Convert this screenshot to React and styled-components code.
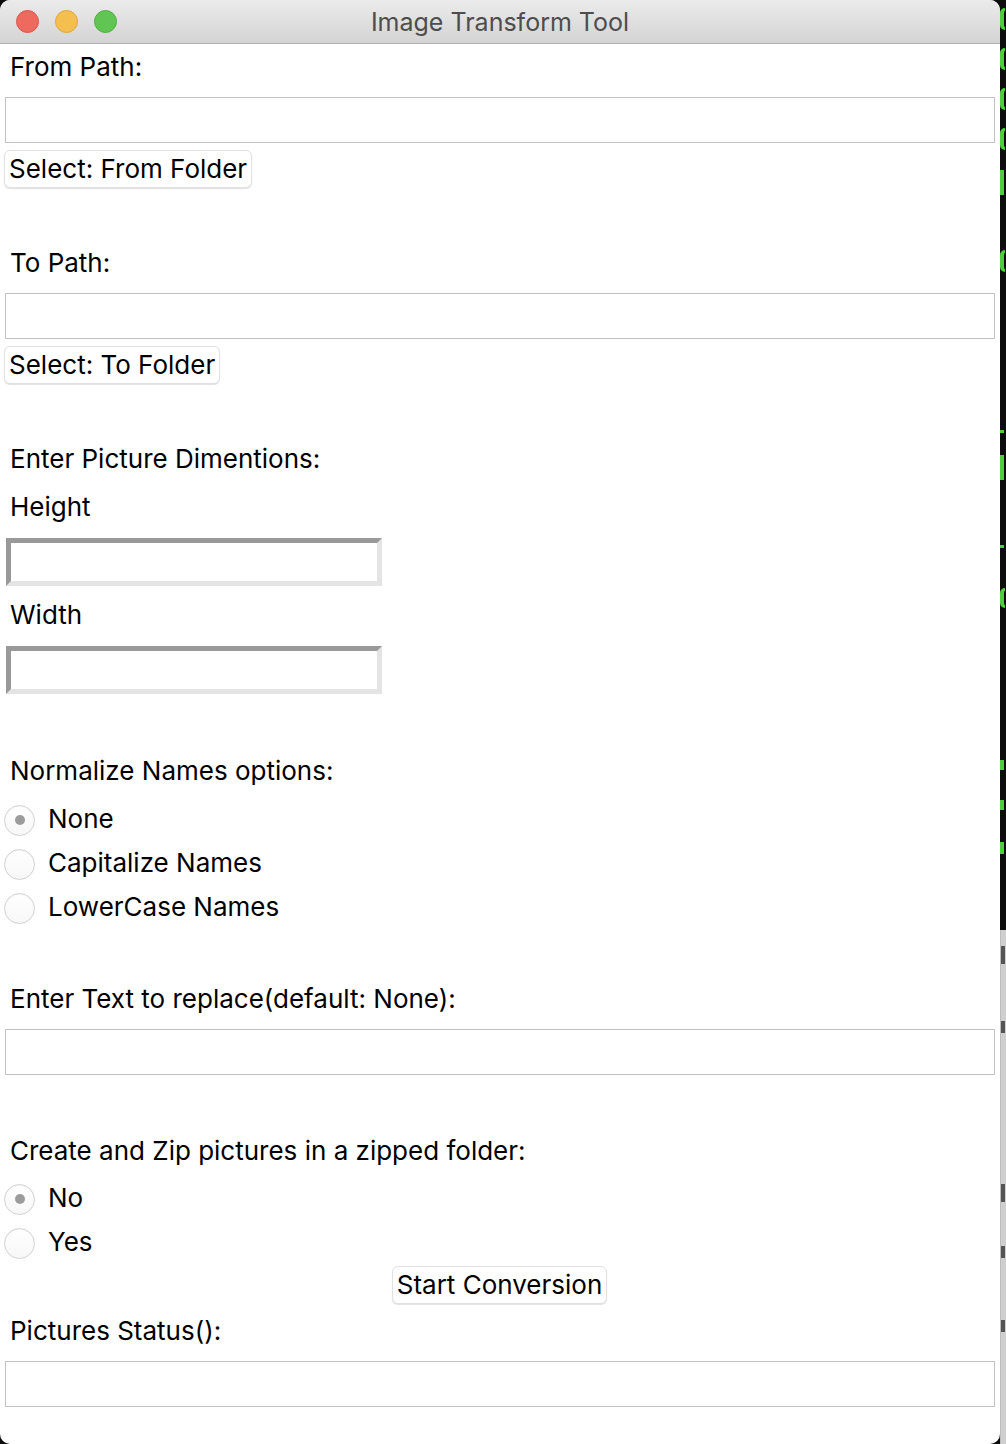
import styled, { createGlobalStyle } from "styled-components";

const GlobalStyle = createGlobalStyle`
  html, body {
    margin: 0;
    padding: 0;
    background: #0d0d0d;
  }
  body {
    font-family: Inter, "Liberation Sans", Arial, sans-serif;
  }
`;

const Desktop = styled.div`
  display: grid;
  grid-template-columns: 1000px 1fr;
  width: 1006px;
  height: 1444px;
  overflow: hidden;
  background: #0d0d0d;
`;

const Window = styled.div`
  display: flex;
  flex-direction: column;
  height: 1444px;
  background: #ffffff;
  border-radius: 10px;
  overflow: hidden;
`;

const TitleBar = styled.div`
  position: relative;
  display: flex;
  align-items: center;
  justify-content: center;
  height: 43px;
  flex-shrink: 0;
  background: linear-gradient(#ebebeb, #d4d4d4);
  border-bottom: 1px solid #b1b1b1;
`;

const Lights = styled.div`
  position: absolute;
  left: 16px;
  top: 10px;
  display: flex;
  gap: 16px;
`;

const Light = styled.span`
  width: 23px;
  height: 23px;
  border-radius: 50%;
  background: ${(p) => p.$color};
  border: 1px solid ${(p) => p.$edge};
  box-sizing: border-box;
`;

const Title = styled.div`
  font-size: 25px;
  color: #4d4d4d;
`;

const Content = styled.div`
  display: flex;
  flex-direction: column;
  align-items: flex-start;
  padding: 0 5px;
`;

const Label = styled.div`
  font-size: 26px;
  line-height: 30px;
  color: #000;
  padding-left: 5px;
  margin-top: ${(p) => p.$top}px;
`;

const Entry = styled.div`
  align-self: stretch;
  height: 46px;
  box-sizing: border-box;
  border: 1px solid #c2c2c2;
  background: #fff;
  margin-top: ${(p) => p.$top}px;
`;

const SunkenEntry = styled.div`
  width: 376px;
  height: 48px;
  box-sizing: border-box;
  margin-left: 1px;
  border: 5px solid;
  border-color: #999999 #e4e4e4 #e4e4e4 #999999;
  background: #fff;
  margin-top: ${(p) => p.$top}px;
`;

const Button = styled.div`
  font-size: 26px;
  line-height: 36px;
  height: 38px;
  box-sizing: border-box;
  padding: 0 4px;
  margin-left: -1px;
  margin-top: ${(p) => p.$top}px;
  border: 1px solid #e1e1e1;
  border-radius: 6px;
  background: #fff;
  box-shadow: 0 1px 1px rgba(0, 0, 0, 0.12);
  color: #000;
  align-self: ${(p) => (p.$center ? "center" : "flex-start")};
`;

const RadioGroup = styled.div`
  display: flex;
  flex-direction: column;
  margin-top: ${(p) => p.$top}px;
`;

const RadioRow = styled.div`
  display: flex;
  align-items: center;
  height: 44px;
  gap: 13px;
  font-size: 26px;
  color: #000;
`;

const Circle = styled.span`
  display: flex;
  align-items: center;
  justify-content: center;
  width: 31px;
  height: 31px;
  box-sizing: border-box;
  margin-left: -1px;
  margin-top: 4px;
  border-radius: 50%;
  border: 1px solid #d2d2d2;
  background: linear-gradient(#ffffff, #f7f7f7);
  box-shadow: inset 0 1px 1px rgba(0, 0, 0, 0.04);

  &::after {
    content: "";
    display: ${(p) => (p.$on ? "block" : "none")};
    width: 10px;
    height: 10px;
    border-radius: 50%;
    background: #9c9c9c;
  }
`;

const Side = styled.div`
  display: flex;
  flex-direction: column;
  overflow: hidden;
`;

const Terminal = styled.div`
  display: flex;
  flex-direction: column;
  height: 930px;
  flex-shrink: 0;
  background: #0d0d0d;
`;

const Glyph = styled.span`
  width: 5px;
  height: ${(p) => p.$h || 22}px;
  margin-top: ${(p) => p.$top}px;
  flex-shrink: 0;
  box-sizing: border-box;
  border-left: 4px solid #4ccf3a;
  border-top: ${(p) => (p.$bar ? 0 : 3)}px solid #4ccf3a;
  border-bottom: ${(p) => (p.$bar ? 0 : 3)}px solid #4ccf3a;
  border-radius: ${(p) => (p.$bar ? 0 : "10px 0 0 10px")};
`;

const Behind = styled.div`
  display: flex;
  flex-direction: column;
  flex: 1;
  background: #cfcfcf;
  border-left: 1px solid #bdbdbd;
`;

const Mark = styled.span`
  width: 4px;
  height: ${(p) => p.$h || 12}px;
  margin-top: ${(p) => p.$top}px;
  flex-shrink: 0;
  background: #555;
`;

const Radio = ({ on, children }) => (
  <RadioRow>
    <Circle $on={on} />
    {children}
  </RadioRow>
);

export default function App() {
  return (
    <>
      <GlobalStyle />
      <Desktop>
        <Window>
          <TitleBar>
            <Lights>
              <Light $color="#ee6a5f" $edge="#d9564b" />
              <Light $color="#f5bf4f" $edge="#dca43a" />
              <Light $color="#61c554" $edge="#4fae43" />
            </Lights>
            <Title>Image Transform Tool</Title>
          </TitleBar>
          <Content>
            <Label $top={8}>From Path:</Label>
            <Entry $top={15} />
            <Button $top={7}>Select: From Folder</Button>

            <Label $top={60}>To Path:</Label>
            <Entry $top={15} />
            <Button $top={7}>Select: To Folder</Button>

            <Label $top={60}>Enter Picture Dimentions:</Label>
            <Label $top={18}>Height</Label>
            <SunkenEntry $top={16} />
            <Label $top={14}>Width</Label>
            <SunkenEntry $top={16} />

            <Label $top={62}>Normalize Names options:</Label>
            <RadioGroup $top={10}>
              <Radio on>None</Radio>
              <Radio>Capitalize Names</Radio>
              <Radio>LowerCase Names</Radio>
            </RadioGroup>

            <Label $top={56}>Enter Text to replace(default: None):</Label>
            <Entry $top={15} />

            <Label $top={61}>Create and Zip pictures in a zipped folder:</Label>
            <RadioGroup $top={9}>
              <Radio on>No</Radio>
              <Radio>Yes</Radio>
            </RadioGroup>
            <Button $top={3} $center>Start Conversion</Button>

            <Label $top={12}>Pictures Status():</Label>
            <Entry $top={15} />
          </Content>
        </Window>
        <Side>
          <Terminal>
            <Glyph $top={8} />
            <Glyph $top={18} />
            <Glyph $top={18} />
            <Glyph $top={18} />
            <Glyph $top={20} $h={25} $bar />
            <Glyph $top={55} />
            <Glyph $top={158} $h={3} $bar />
            <Glyph $top={22} $h={25} $bar />
            <Glyph $top={65} $h={3} $bar />
            <Glyph $top={40} $h={20} />
            <Glyph $top={152} $h={10} $bar />
            <Glyph $top={30} $h={10} $bar />
            <Glyph $top={32} $h={12} $bar />
          </Terminal>
          <Behind>
            <Mark $top={16} $h={18} />
            <Mark $top={57} $h={12} />
            <Mark $top={151} $h={18} />
            <Mark $top={44} $h={12} />
            <Mark $top={62} $h={12} />
          </Behind>
        </Side>
      </Desktop>
    </>
  );
}
